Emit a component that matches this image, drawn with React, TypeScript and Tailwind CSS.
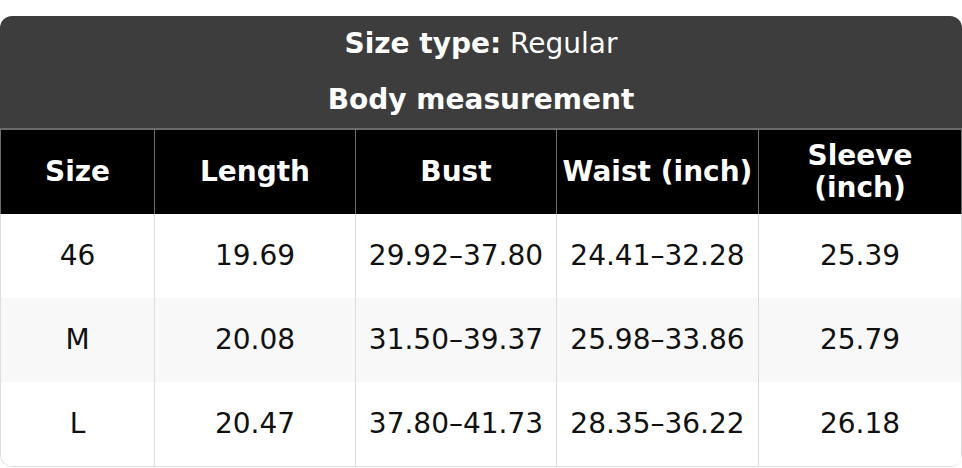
import React from "react";

const rows = [
  ["46", "19.69", "29.92–37.80", "24.41–32.28", "25.39"],
  ["M", "20.08", "31.50–39.37", "25.98–33.86", "25.79"],
  ["L", "20.47", "37.80–41.73", "28.35–36.22", "26.18"],
];

const headers = ["Size", "Length", "Bust", "Waist (inch)", "Sleeve (inch)"];

const cols = "grid grid-cols-[154px_201px_201px_202px_203px]";

export default function App() {
  return (
    <div className="w-[962px] bg-white pt-4 text-[28px] leading-[1.15] text-[#111]" style={{ fontFamily: '"DejaVu Sans", sans-serif' }}>
      <div className="rounded-[12px] overflow-hidden">
        {/* Title block */}
        <div className="bg-[#3d3d3d] text-white text-center">
          <div className="h-[56px] flex items-center justify-center">
            <span className="font-bold">Size type:</span>
            <span>&nbsp;Regular</span>
          </div>
          <div className="h-[56px] flex items-center justify-center font-bold">Body measurement</div>
        </div>

        {/* Column headers */}
        <div className={`${cols} bg-black text-white font-bold border-t-2 border-l border-[#6b6b6b]`}>
          {headers.map((h) => (
            <div key={h} className="h-[84px] px-[5px] flex items-center justify-center text-center border-r border-[#6b6b6b]">
              {h}
            </div>
          ))}
        </div>

        {/* Body */}
        <div className="border-l border-b border-[#dcdcdc] rounded-b-[12px] overflow-hidden">
          {rows.map((r, i) => (
            <div key={i} className={`${cols} ${i === 1 ? "bg-[#f8f8f8]" : "bg-white"}`}>
              {r.map((c, j) => (
                <div key={j} className="h-[84px] flex items-center justify-center border-r border-[#dcdcdc]">
                  {c}
                </div>
              ))}
            </div>
          ))}
        </div>
      </div>
    </div>
  );
}
